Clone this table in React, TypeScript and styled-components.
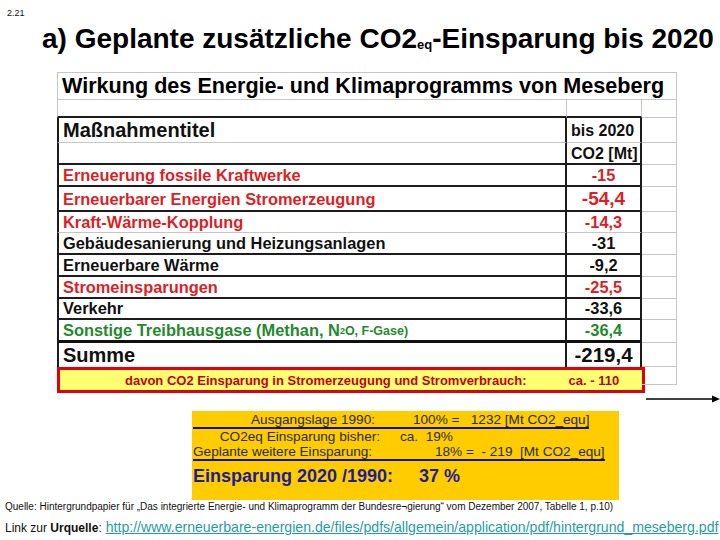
import React from "react";
import styled, { createGlobalStyle } from "styled-components";

const Global = createGlobalStyle`
  html, body { margin: 0; padding: 0; background: #ffffff; }
  body {
    width: 720px; height: 540px; overflow: hidden;
    font-family: "Liberation Sans", Arial, sans-serif;
  }
  * { box-sizing: border-box; }
`;

const Slide = styled.div`
  width: 720px;
  height: 540px;
  display: flex;
  flex-direction: column;
  color: #000;
`;

const Header = styled.header`
  height: 72px;
  display: flex;
  flex-direction: column;
`;

const SlideNo = styled.div`
  font-size: 9px;
  line-height: 10px;
  padding: 8px 0 0 7px;
  color: #111;
`;

const Title = styled.h1`
  margin: 5px 0 0 42px;
  font-size: 28px;
  line-height: 32px;
  font-weight: bold;
  white-space: nowrap;
`;

const TitleSub = styled.span`
  font-size: 13px;
  vertical-align: -1px;
`;

type Line = "gray" | "dark" | "thick" | "none";

const line = (l: Line = "none") =>
  l === "gray"
    ? "1px solid #c6c6c6"
    : l === "dark"
    ? "2px solid #1c1c1c"
    : l === "thick"
    ? "3px solid #111"
    : "none";

const tones: Record<string, string> = {
  red: "#dc1f27",
  black: "#111111",
  green: "#248a2c",
};

const Sheet = styled.div`
  margin-left: 57px;
  width: 620px;
  display: flex;
  flex-direction: column;
`;

const Row = styled.div<{ $h: number }>`
  display: grid;
  grid-template-columns: 510px 75px 35px;
  height: ${(p) => p.$h}px;
`;

const SheetTitle = styled.div`
  grid-column: span 3;
  border: 1px solid #c6c6c6;
  display: flex;
  align-items: center;
  padding-left: 4px;
  font-size: 21.6px;
  font-weight: bold;
  white-space: nowrap;
`;

const Cell = styled.div<{
  $b?: Line;
  $l?: Line;
  $r?: Line;
  $tone?: string;
  $size?: number;
  $align?: "left" | "center";
}>`
  border-bottom: ${(p) => line(p.$b)};
  border-left: ${(p) => line(p.$l)};
  border-right: ${(p) => line(p.$r)};
  display: flex;
  align-items: center;
  justify-content: ${(p) => (p.$align === "center" ? "center" : "flex-start")};
  padding-left: ${(p) => (p.$align === "center" ? 0 : 4)}px;
  padding-top: 1px;
  font-weight: bold;
  font-size: ${(p) => p.$size ?? 16.4}px;
  color: ${(p) => tones[p.$tone ?? "black"]};
  white-space: nowrap;
`;

const SpareCell = styled.div<{ $h?: number }>`
  border-bottom: 1px solid #c6c6c6;
  border-right: 1px solid #c6c6c6;
  height: ${(p) => (p.$h ? `${p.$h}px` : "auto")};
  align-self: ${(p) => (p.$h ? "start" : "stretch")};
`;

const Sub2 = styled.span`
  font-size: 9px;
  vertical-align: -3px;
`;

const Small = styled.span`
  font-size: 12.5px;
`;

const Callout = styled.div`
  grid-column: span 2;
  margin-right: -3px;
  height: 26px;
  border: 3px solid #e1000f;
  background: #ffff72;
  display: flex;
  align-items: center;
  padding-left: 65px;
  font-size: 13px;
  font-weight: bold;
  color: #c2000c;
  white-space: pre;
`;

const CalloutValue = styled.span`
  margin-left: 42px;
`;

const ArrowRow = styled.div`
  height: 12px;
  padding-left: 646px;
  display: flex;
  align-items: center;
`;

const Summary = styled.section`
  margin: 6px 0 0 192px;
  width: 427px;
  height: 89px;
  background: #ffcc00;
  padding: 2px 0 0 1px;
  display: flex;
  flex-direction: column;
  align-items: flex-start;
  font-size: 13.6px;
  color: #2b2b2b;
`;

const SumLine = styled.div<{ $underline?: boolean; $h: number }>`
  display: flex;
  align-items: center;
  height: ${(p) => p.$h}px;
  line-height: ${(p) => p.$h - (p.$underline ? 2 : 0)}px;
  border-bottom: ${(p) => (p.$underline ? "2px solid #111" : "none")};
  white-space: pre;
`;

const SumLabel = styled.span<{ $w: number }>`
  display: inline-block;
  width: ${(p) => p.$w}px;
  text-align: right;
`;

const SumValue = styled.span<{ $gap: number }>`
  margin-left: ${(p) => p.$gap}px;
`;

const Result = styled.div`
  margin-top: 4px;
  height: 22px;
  line-height: 22px;
  display: flex;
  font-size: 18px;
  font-weight: bold;
  color: #1c1c9a;
  white-space: pre;
`;

const Source = styled.p`
  margin: 0;
  padding-left: 5px;
  height: 14px;
  line-height: 14px;
  font-size: 10px;
  color: #111;
  white-space: nowrap;
`;

const LinkLine = styled.p`
  margin: 4px 0 0;
  padding-left: 5px;
  font-size: 12px;
  line-height: 18px;
  color: #111;
  white-space: nowrap;
`;

const Url = styled.a`
  margin-left: 4px;
  font-size: 14.1px;
  color: #1f9e9e;
  text-decoration: underline;
`;

type Measure = {
  label: React.ReactNode;
  value: string;
  tone: "red" | "black" | "green";
  h: number;
  b: Line;
  size?: number;
  vsize?: number;
};

const measures: Measure[] = [
  { label: "Erneuerung fossile Kraftwerke", value: "-15", tone: "red", h: 22, b: "dark" },
  { label: "Erneuerbarer Energien Stromerzeugung", value: "-54,4", tone: "red", h: 25, b: "dark", vsize: 19 },
  { label: "Kraft-Wärme-Kopplung", value: "-14,3", tone: "red", h: 21, b: "gray" },
  { label: "Gebäudesanierung und Heizungsanlagen", value: "-31", tone: "black", h: 22, b: "dark" },
  { label: "Erneuerbare Wärme", value: "-9,2", tone: "black", h: 22, b: "dark" },
  { label: "Stromeinsparungen", value: "-25,5", tone: "red", h: 21, b: "dark" },
  { label: "Verkehr", value: "-33,6", tone: "black", h: 22, b: "dark" },
  {
    label: (
      <>
        Sonstige Treibhausgase (Methan, N<Sub2>2</Sub2>
        <Small>O, F-Gase)</Small>
      </>
    ),
    value: "-36,4",
    tone: "green",
    h: 22,
    b: "thick",
  },
  { label: "Summe", value: "-219,4", tone: "black", h: 25, b: "none", size: 20, vsize: 20.5 },
];

export default function App() {
  return (
    <>
      <Global />
      <Slide>
        <Header>
          <SlideNo>2.21</SlideNo>
          <Title>
            a) Geplante zusätzliche CO2<TitleSub>eq</TitleSub>-Einsparung bis 2020
          </Title>
        </Header>

        <Sheet>
          <Row $h={28}>
            <SheetTitle>Wirkung des Energie- und Klimaprogramms von Meseberg</SheetTitle>
          </Row>
          <Row $h={18}>
            <Cell $l="gray" $r="gray" $b="dark" />
            <Cell $r="gray" $b="dark" />
            <SpareCell />
          </Row>
          <Row $h={25}>
            <Cell $l="dark" $r="dark" $b="gray" $size={20}>
              Maßnahmentitel
            </Cell>
            <Cell $r="dark" $b="gray" $size={16}>
              bis 2020
            </Cell>
            <SpareCell />
          </Row>
          <Row $h={22}>
            <Cell $l="dark" $r="dark" $b="dark" />
            <Cell $r="dark" $b="dark" $size={16}>
              CO2 [Mt]
            </Cell>
            <SpareCell />
          </Row>
          {measures.map((m, i) => (
            <Row $h={m.h} key={i}>
              <Cell $l="dark" $r="dark" $b={m.b} $tone={m.tone} $size={m.size}>
                {m.label}
              </Cell>
              <Cell $r="dark" $b={m.b} $tone={m.tone} $size={m.vsize ?? 16.4} $align="center">
                {m.value}
              </Cell>
              <SpareCell />
            </Row>
          ))}
          <Row $h={26}>
            <Callout>
              davon CO2 Einsparung in Stromerzeugung und Stromverbrauch:
              <CalloutValue>ca. - 110</CalloutValue>
            </Callout>
            <SpareCell $h={18} />
          </Row>
        </Sheet>

        <ArrowRow>
          <svg width="74" height="10" viewBox="0 0 74 10">
            <line x1="0" y1="5" x2="68" y2="5" stroke="#000" strokeWidth="1.6" />
            <path d="M66 1.6 L74 5 L66 8.4 Z" fill="#000" />
          </svg>
        </ArrowRow>

        <Summary>
          <SumLine $underline $h={16}>
            <SumLabel $w={182}>Ausgangslage 1990:</SumLabel>
            <SumValue $gap={38}>100% =   1232 [Mt CO2_equ]</SumValue>
          </SumLine>
          <SumLine $h={16}>
            <SumLabel $w={187}>CO2eq Einsparung bisher:</SumLabel>
            <SumValue $gap={20}>ca.  19%</SumValue>
          </SumLine>
          <SumLine $underline $h={16}>
            <SumLabel $w={179}>Geplante weitere Einsparung:</SumLabel>
            <SumValue $gap={63}>18% =  - 219  [Mt CO2_equ]</SumValue>
          </SumLine>
          <Result>
            <SumLabel $w={200}>Einsparung 2020 /1990:</SumLabel>
            <SumValue $gap={26}>37 %</SumValue>
          </Result>
        </Summary>

        <Source>
          Quelle: Hintergrundpapier für „Das integrierte Energie- und Klimaprogramm der
          Bundesre¬gierung“ vom Dezember 2007, Tabelle 1, p.10)
        </Source>
        <LinkLine>
          Link zur <b>Urquelle</b>:
          <Url href="http://www.erneuerbare-energien.de/files/pdfs/allgemein/application/pdf/hintergrund_meseberg.pdf">
            http://www.erneuerbare-energien.de/files/pdfs/allgemein/application/pdf/hintergrund_meseberg.pdf
          </Url>
        </LinkLine>
      </Slide>
    </>
  );
}
